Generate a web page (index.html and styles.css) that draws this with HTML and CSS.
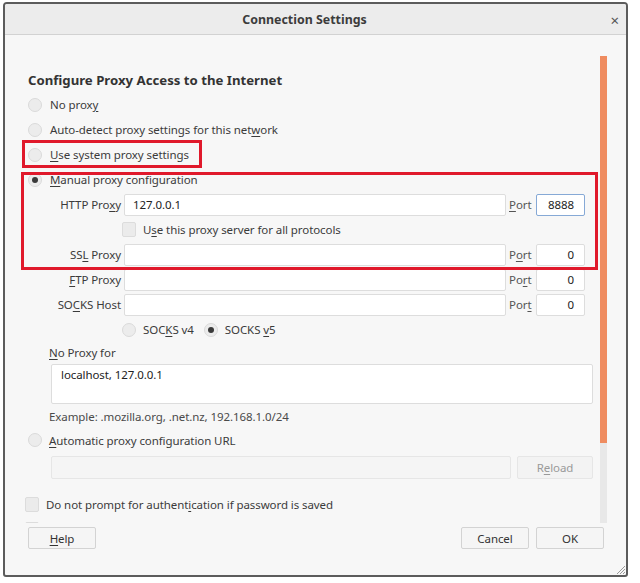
FILE: index.html
```html
<!DOCTYPE html>
<html>
<head>
<meta charset="utf-8">
<title>Connection Settings</title>
<link rel="stylesheet" href="styles.css">
</head>
<body>
<div class="window">
  <div class="titlebar">
    <span class="title">Connection Settings</span>
    <span class="close">×</span>
  </div>
  <div class="main">
    <div class="scroll">
      <div class="heading">Configure Proxy Access to the Internet</div>
      <div class="row"><span class="radio"></span><span>No prox<u>y</u></span></div>
      <div class="row"><span class="radio"></span><span>Auto-detect proxy settings for this net<u>w</u>ork</span></div>
      <div class="row"><span class="radio"></span><span><u>U</u>se system proxy settings</span></div>
      <div class="row"><span class="radio checked"></span><span><u>M</u>anual proxy configuration</span></div>

      <div class="field-row">
        <span class="flabel">HTTP Pro<u>x</u>y</span>
        <span class="input">127.0.0.1</span>
        <span class="plabel"><u>P</u>ort</span>
        <span class="input port focus">8888</span>
      </div>
      <div class="check-row"><span class="checkbox"></span><span>U<u>s</u>e this proxy server for all protocols</span></div>
      <div class="field-row">
        <span class="flabel">SS<u>L</u> Proxy</span>
        <span class="input"></span>
        <span class="plabel">P<u>o</u>rt</span>
        <span class="input port">0</span>
      </div>
      <div class="field-row">
        <span class="flabel"><u>F</u>TP Proxy</span>
        <span class="input"></span>
        <span class="plabel">Po<u>r</u>t</span>
        <span class="input port">0</span>
      </div>
      <div class="field-row">
        <span class="flabel">SO<u>C</u>KS Host</span>
        <span class="input"></span>
        <span class="plabel">Por<u>t</u></span>
        <span class="input port">0</span>
      </div>
      <div class="socks-row">
        <span class="radio"></span><span>SOC<u>K</u>S v4</span>
        <span class="radio checked second"></span><span>SOCKS <u>v</u>5</span>
      </div>
      <div class="noproxy-label"><u>N</u>o Proxy for</div>
      <div class="textarea">localhost, 127.0.0.1</div>
      <div class="example">Example: .mozilla.org, .net.nz, 192.168.1.0/24</div>
      <div class="row auto"><span class="radio"></span><span><u>A</u>utomatic proxy configuration URL</span></div>
      <div class="url-row">
        <span class="input disabled"></span>
        <span class="btn disabled-btn">R<u>e</u>load</span>
      </div>
      <div class="row prompt"><span class="checkbox"></span><span>Do not prompt for authent<u>i</u>cation if password is saved</span></div>
      <div class="row prompt"><span class="checkbox"></span><span></span></div>

      <div class="mark mark-system"></div>
      <div class="mark mark-manual"></div>
    </div>
    <div class="scrollbar"><div class="thumb"></div></div>
  </div>
  <div class="footer">
    <span class="btn"><u>H</u>elp</span>
    <span class="spacer"></span>
    <span class="btn">Cancel</span>
    <span class="btn">OK</span>
  </div>
  <svg class="grip" width="12" height="12" viewBox="0 0 12 12">
    <path d="M11 3 L3 11 M11 6 L6 11 M11 9 L9 11" stroke="#9a9a9a" stroke-width="1" fill="none"/>
  </svg>
</div>
</body>
</html>
```

FILE: styles.css
```css
html, body {
  margin: 0;
  padding: 0;
  background: #ffffff;
}

body {
  padding: 2px 0 0 3px;
  font-family: "Noto Sans", "Open Sans", sans-serif;
  font-size: 11.5px;
  letter-spacing: -0.08px;
  color: #3b3b3b;
}

u {
  text-decoration: underline;
  text-underline-offset: 2px;
  text-decoration-thickness: 1px;
}

.window {
  position: relative;
  box-sizing: border-box;
  width: 625px;
  height: 575px;
  border: 2px solid #5c5c5c;
  border-radius: 4px 4px 3px 3px;
  background: #f7f7f7;
  display: flex;
  flex-direction: column;
  overflow: hidden;
}

.titlebar {
  box-sizing: border-box;
  height: 31px;
  flex: none;
  background: #ececec;
  border-bottom: 1px solid #d2d2d2;
  display: flex;
  align-items: center;
  justify-content: center;
  position: relative;
  padding-right: 22px;
}

.title {
  font-weight: bold;
  font-size: 12.4px;
  letter-spacing: 0;
  color: #3c3c3c;
}

.close {
  position: absolute;
  right: 7px;
  top: 6px;
  font-size: 15px;
  color: #555;
}

.main {
  display: flex;
  height: 488px;
  flex: none;
}

.scroll {
  position: relative;
  flex: 1;
  overflow: hidden;
  padding: 0 7px 0 23px;
}

.heading {
  margin-top: 33px;
  height: 24px;
  line-height: 24px;
  font-weight: bold;
  font-size: 13.2px;
  letter-spacing: 0;
  color: #333;
}

.row {
  height: 25px;
  display: flex;
  align-items: center;
  gap: 8px;
  white-space: nowrap;
}

.radio {
  box-sizing: border-box;
  width: 14px;
  height: 14px;
  border-radius: 50%;
  background: #ececec;
  border: 1px solid #dadada;
  flex: none;
  position: relative;
}

.radio.checked::after {
  content: "";
  position: absolute;
  left: 3px;
  top: 3px;
  width: 6px;
  height: 6px;
  border-radius: 50%;
  background: #3a3a3a;
}

.checkbox {
  box-sizing: border-box;
  width: 14px;
  height: 15px;
  border-radius: 2px;
  background: #ebebeb;
  border: 1px solid #dcdcdc;
  flex: none;
}

.field-row {
  height: 25px;
  display: grid;
  grid-template-columns: 93px 1fr 24px 49px;
  column-gap: 3px;
  align-items: center;
  margin-right: 8px;
  white-space: nowrap;
}

.flabel {
  text-align: right;
}

.plabel {
  color: #555;
}

.input {
  box-sizing: border-box;
  height: 22px;
  background: #ffffff;
  border: 1px solid #dddddd;
  border-radius: 2px;
  line-height: 20px;
  padding: 0 8px;
  color: #222;
}

.input.port {
  text-align: right;
  padding-right: 10px;
}

.input.focus {
  border-color: #86a9d6;
}

.check-row {
  height: 25px;
  display: flex;
  align-items: center;
  gap: 7px;
  padding-left: 94px;
  white-space: nowrap;
}

.socks-row {
  height: 25px;
  display: flex;
  align-items: center;
  gap: 7px;
  padding-left: 94px;
  white-space: nowrap;
}

.socks-row .second {
  margin-left: 3px;
}

.noproxy-label {
  height: 22px;
  line-height: 22px;
  padding-left: 21px;
}

.textarea {
  box-sizing: border-box;
  height: 40px;
  margin-left: 23px;
  background: #ffffff;
  border: 1px solid #dddddd;
  border-radius: 2px;
  padding: 1px 9px;
  line-height: 18px;
  color: #222;
}

.example {
  height: 26px;
  line-height: 26px;
  padding-left: 21px;
  color: #4a4a4a;
}

.row.auto {
  height: 20px;
  gap: 7px;
}

.url-row {
  display: flex;
  gap: 6px;
  margin: 6px 0 0 23px;
  height: 23px;
}

.url-row .input {
  flex: 1;
  height: 23px;
}

.input.disabled {
  background: #f5f5f5;
  border-color: #e6e6e6;
}

.btn {
  box-sizing: border-box;
  width: 68px;
  height: 22px;
  display: flex;
  align-items: center;
  justify-content: center;
  background: #f5f5f5;
  border: 1px solid #d3d3d3;
  border-radius: 2px;
  color: #333;
}

.disabled-btn {
  width: 76px;
  height: 23px;
  color: #9a9a9a;
  border-color: #e6e6e6;
  background: #f3f3f3;
}

.row.prompt {
  margin-left: -3px;
  gap: 7px;
}

.url-row + .row.prompt {
  margin-top: 13px;
}

.mark {
  position: absolute;
  box-sizing: border-box;
  border: 3px solid #e0192b;
}

.mark-system {
  left: 17px;
  top: 105px;
  width: 180px;
  height: 28px;
}

.mark-manual {
  left: 16px;
  top: 137px;
  width: 577px;
  height: 98px;
}

.scrollbar {
  width: 7px;
  margin: 21px 19px 0 0;
  background: #e8e8e8;
  flex: none;
}

.thumb {
  height: 387px;
  background: #ef8c60;
}

.footer {
  flex: 1;
  display: flex;
  align-items: flex-start;
  gap: 7px;
  padding: 4px 22px 0 23px;
}

.spacer {
  flex: 1;
}

.grip {
  position: absolute;
  right: 0;
  bottom: 0;
}
```
